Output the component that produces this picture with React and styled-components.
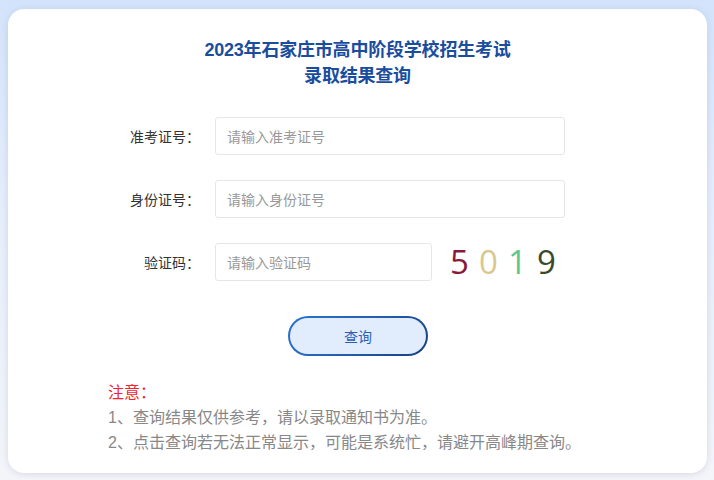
import React from "react";
import styled, { createGlobalStyle } from "styled-components";

const Global = createGlobalStyle`
  html, body { margin: 0; padding: 0; }
  body {
    width: 714px;
    height: 480px;
    overflow: hidden;
    background: linear-gradient(180deg, #d3e3fb 0%, #e6eefb 45%, #f3f5f9 100%);
    font-family: "Noto Sans CJK SC", "Noto Sans", sans-serif;
  }
`;

const Page = styled.div`
  padding: 9px 7px 7px 8px;
  box-sizing: border-box;
  height: 480px;
`;

const Card = styled.div`
  background: #fff;
  border-radius: 16px;
  box-shadow: 0 1px 6px rgba(120, 140, 170, 0.25);
  height: 464px;
  box-sizing: border-box;
  padding: 28px 100px 0 100px;
`;

const Title = styled.h1`
  margin: 0;
  text-align: center;
  font-size: 18px;
  line-height: 26px;
  font-weight: 700;
  color: #1a4d9e;
  font-family: "Liberation Sans", "Noto Sans CJK SC", sans-serif;
  letter-spacing: -0.2px;
`;

const Form = styled.div`
  margin-top: 28px;
  display: flex;
  flex-direction: column;
  gap: 25px;
`;

const Row = styled.div`
  display: flex;
  align-items: center;
`;

const Label = styled.label`
  width: 92px;
  margin-right: 15px;
  text-align: right;
  font-size: 14px;
  color: #333;
  white-space: nowrap;
`;

const Input = styled.input`
  box-sizing: border-box;
  width: ${(p) => p.$w}px;
  height: 38px;
  border: 1px solid #e6e6e6;
  border-radius: 3px;
  padding: 0 11px;
  font-size: 14px;
  font-family: "Noto Sans CJK SC", sans-serif;
  color: #333;
  outline: none;
  &::placeholder { color: #999; }
`;

const Captcha = styled.div`
  display: flex;
  margin-left: 18px;
  font-family: "Open Sans", sans-serif;
  font-size: 33px;
  font-weight: 400;
`;

const Digit = styled.span`
  width: 29px;
  color: ${(p) => p.$c};
  line-height: 38px;
`;

const ButtonWrap = styled.div`
  display: flex;
  justify-content: center;
  margin-top: 35px;
`;

const Button = styled.button`
  width: 140px;
  height: 40px;
  border-radius: 20px;
  border: 2px solid transparent;
  background:
    linear-gradient(#e1ecfd, #e1ecfd) padding-box,
    linear-gradient(135deg, #2b74d0 0%, #245fae 50%, #163f7e 100%) border-box;
  color: #2a5fb5;
  font-size: 14px;
  font-family: "Noto Sans CJK SC", sans-serif;
  padding: 0;
  margin-left: 1px;
  cursor: pointer;
`;

const Notes = styled.div`
  margin-top: 24px;
  font-size: 16px;
  line-height: 25px;
  color: #888888;
  font-family: "Liberation Sans", "Noto Sans CJK SC", sans-serif;
`;

const NoteTitle = styled.div`
  color: #f5222d;
`;

const digits = [
  { d: "5", c: "#8a1838" },
  { d: "0", c: "#d9c88e" },
  { d: "1", c: "#5cc88c" },
  { d: "9", c: "#3a4a28" },
];

export default function App() {
  return (
    <>
      <Global />
      <Page>
        <Card>
          <Title>
            2023年石家庄市高中阶段学校招生考试
            <br />
            录取结果查询
          </Title>
          <Form>
            <Row>
              <Label>准考证号：</Label>
              <Input $w={350} placeholder="请输入准考证号" />
            </Row>
            <Row>
              <Label>身份证号：</Label>
              <Input $w={350} placeholder="请输入身份证号" />
            </Row>
            <Row>
              <Label>验证码：</Label>
              <Input $w={217} placeholder="请输入验证码" />
              <Captcha>
                {digits.map((x, i) => (
                  <Digit key={i} $c={x.c}>{x.d}</Digit>
                ))}
              </Captcha>
            </Row>
          </Form>
          <ButtonWrap>
            <Button>查询</Button>
          </ButtonWrap>
          <Notes>
            <NoteTitle>注意：</NoteTitle>
            <div>1、查询结果仅供参考，请以录取通知书为准。</div>
            <div>2、点击查询若无法正常显示，可能是系统忙，请避开高峰期查询。</div>
          </Notes>
        </Card>
      </Page>
    </>
  );
}
